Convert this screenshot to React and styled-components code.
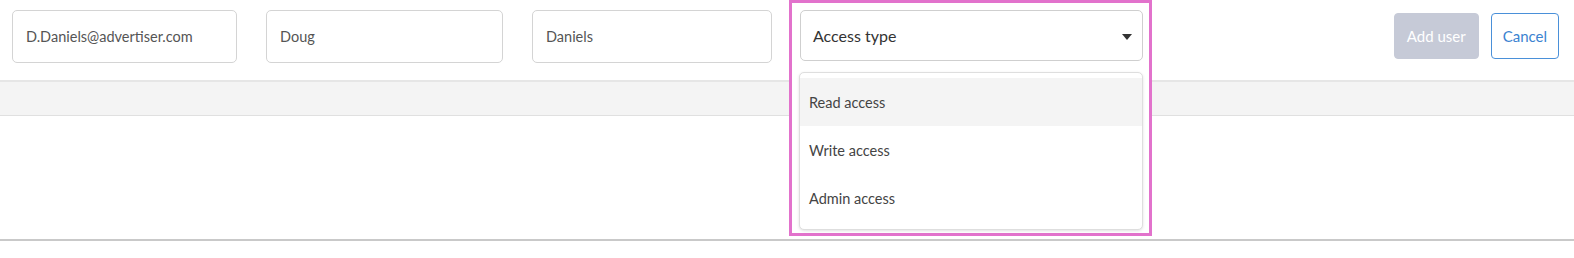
import React from "react";
import styled, { createGlobalStyle } from "styled-components";

const Global = createGlobalStyle`
  html, body { margin: 0; padding: 0; background: #fff; }
  body { font-family: Lato, "Open Sans", "Liberation Sans", sans-serif; overflow: hidden; }
  * { box-sizing: border-box; }
`;

const Page = styled.div`
  width: 1574px;
  height: 258px;
  overflow: hidden;
  position: relative;
`;

const Toolbar = styled.div`
  display: flex;
  align-items: flex-start;
  height: 80px;
  padding: 10px 15px 0 12px;
`;

const Field = styled.div`
  width: ${(p) => p.$w}px;
  height: 53px;
  margin-right: ${(p) => p.$mr || 0}px;
  border: 1px solid #d4d4d4;
  border-radius: 5px;
  display: flex;
  align-items: center;
  padding-left: 13px;
  font-size: 14.5px;
  color: #555;
  background: #fff;
`;

const SelectCell = styled.div`
  position: relative;
  width: 343px;
`;

const Highlight = styled.div`
  position: absolute;
  left: -11px;
  right: -9px;
  top: -10px;
  height: 236px;
  border: 3px solid #e272cc;
  background: #fff;
  z-index: 1;
`;

const SelectBox = styled.div`
  position: relative;
  z-index: 2;
  height: 51px;
  border: 1px solid #cfcfcf;
  border-radius: 5px;
  background: #fff;
  display: flex;
  align-items: center;
  justify-content: space-between;
  padding: 0 10px 0 12px;
  font-size: 16px;
  color: #333;
`;

const Caret = styled.svg`
  width: 10px;
  height: 6px;
  margin-top: 2px;
`;

const Menu = styled.ul`
  position: absolute;
  z-index: 3;
  top: 62px;
  left: -1px;
  right: 0;
  margin: 0;
  padding: 5px 0 7px;
  list-style: none;
  background: #fff;
  border: 1px solid #dedede;
  border-radius: 5px;
  box-shadow: 0 1px 3px rgba(0, 0, 0, 0.12);
`;

const MenuItem = styled.li`
  height: 48px;
  display: flex;
  align-items: center;
  padding-left: 9px;
  font-size: 14.5px;
  color: #444;
  background: ${(p) => (p.$active ? "#f4f4f4" : "#fff")};
`;

const Actions = styled.div`
  margin-left: auto;
  display: flex;
  gap: 12px;
  padding-top: 3px;
`;

const Button = styled.button`
  height: 46px;
  padding: 0 ${(p) => (p.$primary ? 12 : 11)}px;
  border-radius: 4px;
  font-family: inherit;
  font-size: 15px;
  cursor: pointer;
  border: 1px solid ${(p) => (p.$primary ? "#c6cad7" : "#4a90d9")};
  background: ${(p) => (p.$primary ? "#c6cad7" : "#fff")};
  color: ${(p) => (p.$primary ? "#fff" : "#3b83d1")};
`;

const Band = styled.div`
  height: 36px;
  background: #f4f4f4;
  border-top: 2px solid #e6e6e6;
  border-bottom: 1px solid #e0e0e0;
`;

const Body = styled.div`
  height: 125px;
  border-bottom: 2px solid #c9c9c9;
`;

const Footer = styled.div`
  padding: 13px 0 0 140px;
  font-size: 15px;
  line-height: 18px;
  color: #1d4f9c;
`;

export default function App() {
  return (
    <Page>
      <Global />
      <Toolbar>
        <Field $w={225} $mr={29}>D.Daniels@advertiser.com</Field>
        <Field $w={237} $mr={29}>Doug</Field>
        <Field $w={240} $mr={28}>Daniels</Field>
        <SelectCell>
          <Highlight />
          <SelectBox>
            <span>Access type</span>
            <Caret viewBox="0 0 10 6">
              <path d="M0 0 L10 0 L5 6 Z" fill="#333" />
            </Caret>
          </SelectBox>
          <Menu>
            <MenuItem $active>Read access</MenuItem>
            <MenuItem>Write access</MenuItem>
            <MenuItem>Admin access</MenuItem>
          </Menu>
        </SelectCell>
        <Actions>
          <Button $primary>Add user</Button>
          <Button>Cancel</Button>
        </Actions>
      </Toolbar>
      <Band />
      <Body />
      <Footer>Add multiple users</Footer>
    </Page>
  );
}
